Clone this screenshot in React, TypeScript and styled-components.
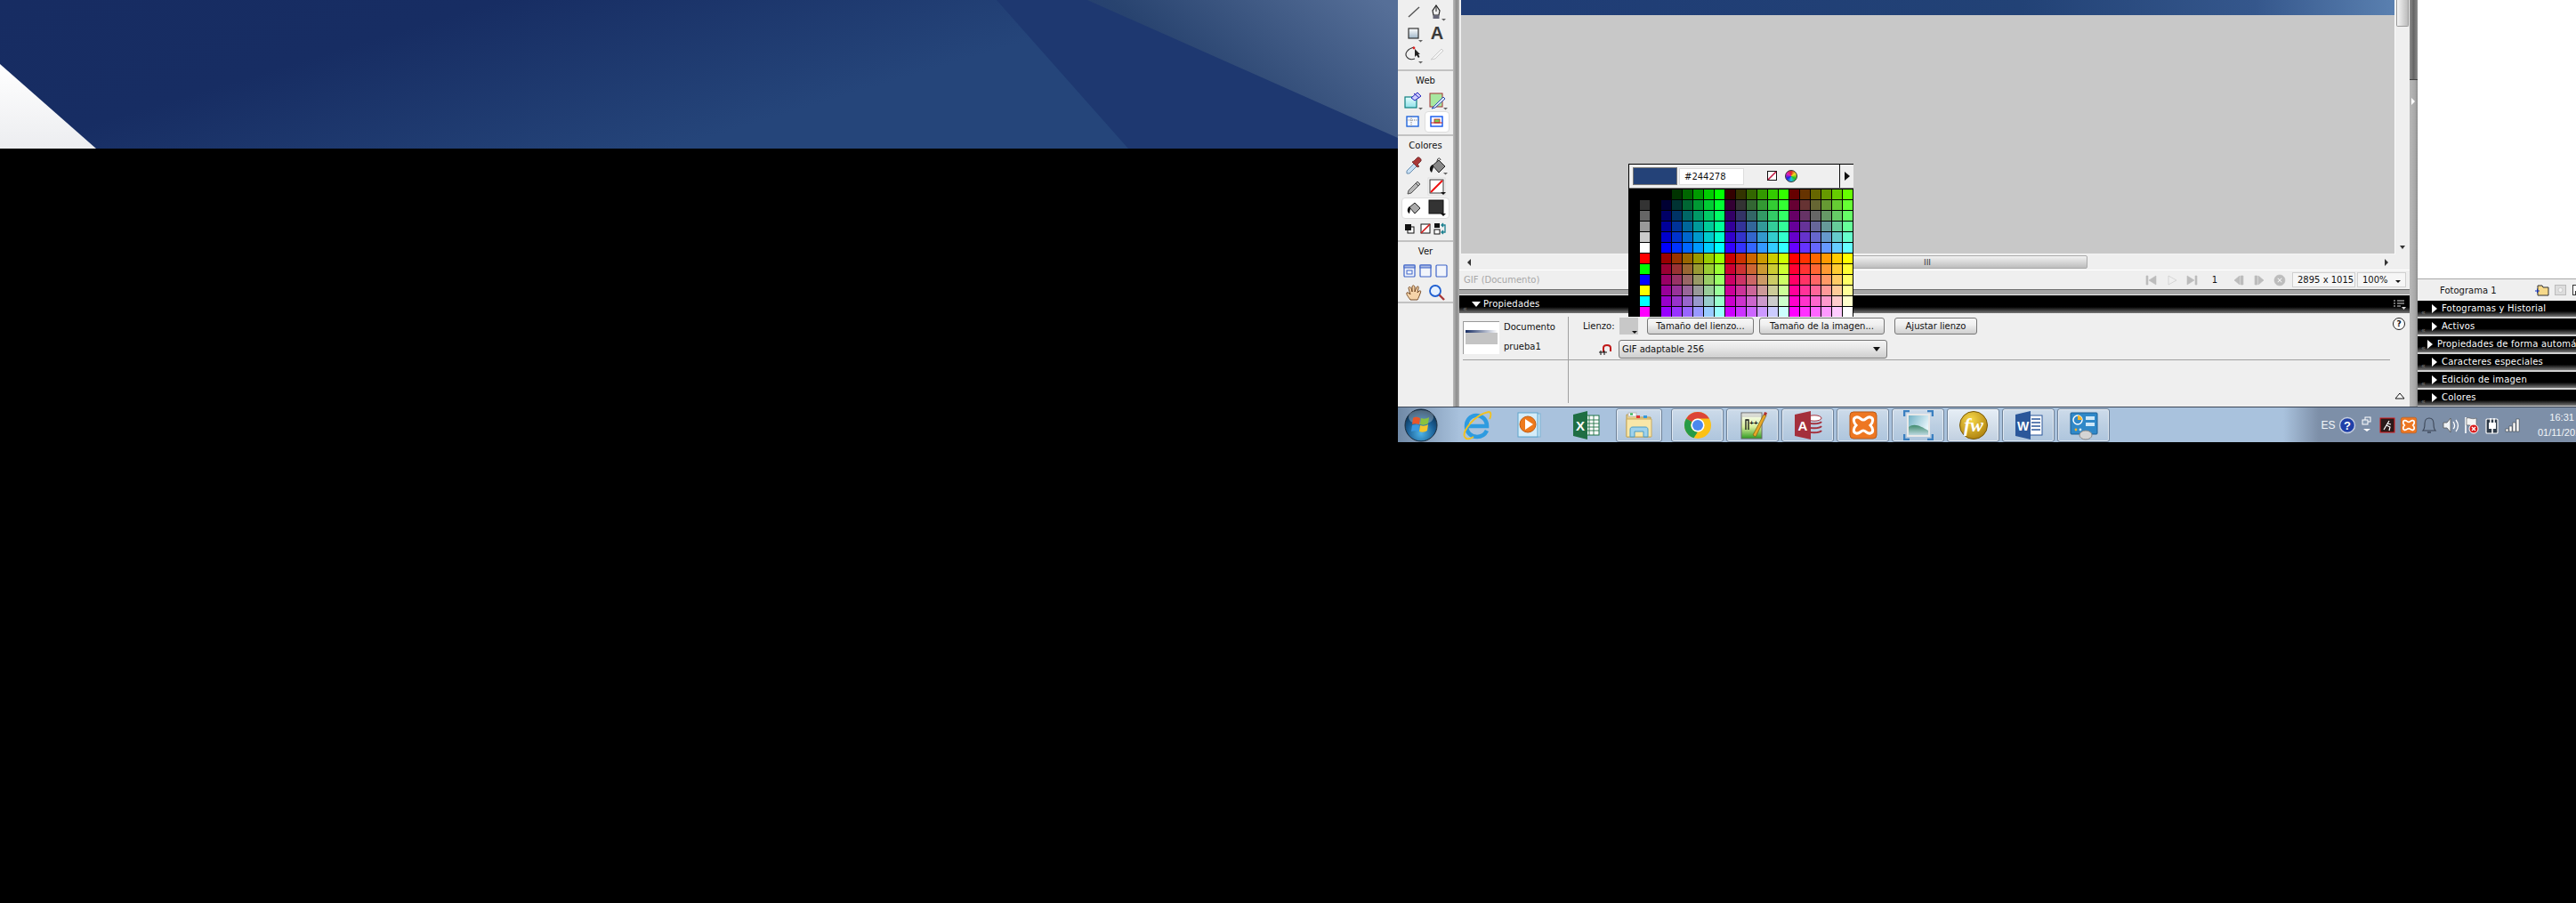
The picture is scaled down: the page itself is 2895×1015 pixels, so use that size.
import { createGlobalStyle, styled } from "styled-components";

const GlobalStyle = createGlobalStyle`
  html, body {
    margin: 0;
    padding: 0;
    background: #000;
    overflow: hidden;
  }
  body {
    font-family: "DejaVu Sans", "Liberation Sans", sans-serif;
    font-size: 10px;
    color: #111;
  }
`;

const Caret = ({ x = 20, y = 20 }: { x?: number; y?: number }) => (
  <polygon points={`${x},${y} ${x + 5},${y} ${x + 2.5},${y + 2.5}`} fill="#666" />
);

const ToolSvg = styled.svg<{ $narrow?: boolean }>`
  display: block;
  width: ${(p) => (p.$narrow ? 16 : 26)}px;
  height: 24px;
  flex: none;
`;

const LineTool = () => (
  <ToolSvg viewBox="0 0 26 24">
    <line x1="7" y1="18" x2="19" y2="7" stroke="#555" strokeWidth="1.4" />
  </ToolSvg>
);

const PenTool = () => (
  <ToolSvg viewBox="0 0 26 24">
    <path d="M12 5 L16 11 L15 16 L9 16 L8 11 Z" fill="#eee" stroke="#222" strokeWidth="1.2" />
    <line x1="12" y1="5" x2="12" y2="12" stroke="#222" />
    <rect x="8.5" y="16" width="7" height="4" fill="#667" />
    <Caret x={18} y={20} />
  </ToolSvg>
);

const RectTool = () => (
  <ToolSvg viewBox="0 0 26 24">
    <defs>
      <linearGradient id="rectFill" x1="0" y1="0" x2="0" y2="1">
        <stop offset="0" stopColor="#fff" />
        <stop offset="1" stopColor="#9fb6c8" />
      </linearGradient>
    </defs>
    <rect x="7" y="7" width="11" height="11" fill="url(#rectFill)" stroke="#333" strokeWidth="1.2" />
    <Caret x={18} y={20} />
  </ToolSvg>
);

const TextTool = () => (
  <ToolSvg viewBox="0 0 26 24">
    <text x="13" y="19" textAnchor="middle" fontFamily="Liberation Sans" fontWeight="700" fontSize="20" fill="#3a3a3a">
      A
    </text>
  </ToolSvg>
);

const SubselectTool = () => (
  <ToolSvg viewBox="0 0 26 24">
    <path d="M13 4 C6 6 2 11 5 15 C7 18 11 18 14 17" fill="none" stroke="#333" strokeWidth="1.1" />
    <circle cx="13" cy="5" r="1.4" fill="#e02020" />
    <path d="M14 6 L14 15 L16 13 L18 16 L19.5 15 L18 12 L20 12 Z" fill="#222" />
    <Caret x={18} y={20} />
  </ToolSvg>
);

const KnifeTool = () => (
  <ToolSvg viewBox="0 0 26 24">
    <path d="M6 18 L18 6 L20 8 L11 17 Z" fill="#f4f4f4" stroke="#ccc" />
  </ToolSvg>
);

const HotspotTool = () => (
  <ToolSvg viewBox="0 0 26 24">
    <defs>
      <linearGradient id="hotspotFill" x1="0" y1="0" x2="0" y2="1">
        <stop offset="0" stopColor="#e8ffff" />
        <stop offset="1" stopColor="#8fe0e8" />
      </linearGradient>
    </defs>
    <rect x="3" y="8" width="13" height="12" fill="url(#hotspotFill)" stroke="#0d7f7f" strokeWidth="1.2" />
    <path d="M10 9 L17 3 L21 7 L14 12 Z" fill="#cfcfff" stroke="#2222bb" />
    <line x1="13" y1="4" x2="19" y2="9" stroke="#2222bb" />
    <Caret x={18} y={20} />
  </ToolSvg>
);

const SliceTool = () => (
  <ToolSvg viewBox="0 0 26 24">
    <rect x="5" y="4" width="14" height="15" fill="#a8e8a0" stroke="#a03030" strokeWidth="1" />
    <path d="M7 21 L20 8 L22 10 L11 20 Z" fill="#dfe8f8" stroke="#2a4fb0" />
    <Caret x={20} y={20} />
  </ToolSvg>
);

const HideSlices = () => (
  <ToolSvg viewBox="0 0 26 24">
    <rect x="6" y="6" width="13" height="11" fill="#f4f8ff" stroke="#2266dd" strokeWidth="1.4" />
    <path d="M6 10 H19 M11 6 V17" stroke="#777" strokeDasharray="1 1" />
  </ToolSvg>
);

const ShowSlices = () => (
  <ToolSvg viewBox="0 0 26 24">
    <rect x="6" y="6" width="13" height="11" fill="#fff" stroke="#1155ee" strokeWidth="1.4" />
    <rect x="10" y="9" width="6" height="4" fill="#7fc850" stroke="#c02020" strokeWidth="0.8" />
    <path d="M6 13 H19" stroke="#c02020" />
  </ToolSvg>
);

const Eyedropper = () => (
  <ToolSvg viewBox="0 0 26 24">
    <path d="M5 21 L5 18 L14 9 L17 12 L8 21 Z" fill="#c8e0f4" stroke="#6b8fb0" />
    <path d="M13 7 L17 3 C19 2 22 5 21 7 L17 11 L19 13 L17 14 L11 8 Z" fill="#a83838" stroke="#5a1a1a" strokeWidth="0.7" />
  </ToolSvg>
);

const Bucket = () => (
  <ToolSvg viewBox="0 0 26 24">
    <path d="M8 12 L15 6 L22 13 L15 20 Z" fill="#888" stroke="#222" />
    <path d="M8 11 C4 13 4 18 7 20 L9 14 Z" fill="#111" />
    <path d="M13 8 C13 4 16 2 17 6" fill="none" stroke="#333" />
    <Caret x={20} y={20} />
  </ToolSvg>
);

const Pencil = () => (
  <ToolSvg viewBox="0 0 26 24">
    <path d="M6 20 L7 16 L17 6 L20 9 L10 19 Z" fill="#b8b8b8" stroke="#555" />
    <path d="M15 8 L18 11" stroke="#555" />
  </ToolSvg>
);

const StrokeSwatch = () => (
  <ToolSvg viewBox="0 0 26 24">
    <rect x="3" y="2" width="19" height="19" fill="#fff" stroke="#ddd" />
    <rect x="5" y="4" width="15" height="15" fill="#fff" stroke="#333" />
    <line x1="6" y1="18" x2="19" y2="5" stroke="#ee1111" strokeWidth="2" />
    <polygon points="17,18 23,18 20,21" fill="#111" />
  </ToolSvg>
);

const FillBucket = () => (
  <ToolSvg viewBox="0 0 26 24">
    <path d="M8 11 L14 6 L20 12 L14 18 Z" fill="#aaa" stroke="#222" />
    <path d="M8 10 C5 12 5 17 8 18 L9 13 Z" fill="#111" />
  </ToolSvg>
);

const FillSwatch = () => (
  <ToolSvg viewBox="0 0 26 24">
    <rect x="4" y="3" width="16" height="15" fill="#333" stroke="#111" />
    <polygon points="17,18 23,18 20,21" fill="#111" />
  </ToolSvg>
);

const DefaultColors = () => (
  <ToolSvg $narrow viewBox="0 0 16 24">
    <rect x="5" y="9" width="7" height="7" fill="#fff" stroke="#111" />
    <rect x="2" y="6" width="7" height="7" fill="#111" />
  </ToolSvg>
);

const NoColor = () => (
  <ToolSvg $narrow viewBox="0 0 16 24">
    <rect x="3" y="6" width="10" height="10" fill="#fff" stroke="#111" />
    <line x1="3" y1="16" x2="13" y2="6" stroke="#d01818" strokeWidth="1.6" />
  </ToolSvg>
);

const SwapColors = () => (
  <ToolSvg $narrow viewBox="0 0 16 24">
    <rect x="1" y="5" width="6" height="5" fill="#111" />
    <rect x="1" y="12" width="6" height="5" fill="#fff" stroke="#111" />
    <path d="M9 7 H13 V15 H9 M11 5 L9 7 L11 9 M11 13 L9 15 L11 17" fill="none" stroke="#1a7f8f" strokeWidth="1.3" />
  </ToolSvg>
);

const ViewIcon = ({ inner }: { inner: "dialog" | "bar" | "plain" }) => (
  <ToolSvg $narrow viewBox="0 0 16 24">
    <rect x="2" y="5" width="12" height="13" rx="1" fill="#f2f5fb" stroke="#3f64c8" strokeWidth="1.2" />
    {inner !== "plain" && <rect x="2" y="5" width="12" height="3" fill="#a9b9e4" stroke="#3f64c8" />}
    {inner === "dialog" && <rect x="5" y="11" width="6" height="4" fill="none" stroke="#3f64c8" />}
  </ToolSvg>
);

const Hand = () => (
  <ToolSvg viewBox="0 0 26 24">
    <path
      d="M9 20 C7 17 4 14 5 12 C6 11 8 13 9 14 L7 7 C7 5 9 5 10 7 L11 11 L11 5 C12 3 13 4 14 5 L14 11 L16 6 C17 4 19 5 18 7 L17 12 L19 10 C21 9 21 11 20 13 C19 16 18 18 17 20 Z"
      fill="#f5d3a8"
      stroke="#6b3f1a"
      strokeWidth="0.9"
    />
  </ToolSvg>
);

const Magnifier = () => (
  <ToolSvg viewBox="0 0 26 24">
    <circle cx="11" cy="10" r="6" fill="#e4f0ff" stroke="#1f5fd0" strokeWidth="1.8" />
    <line x1="15.5" y1="14.5" x2="21" y2="20" stroke="#a83838" strokeWidth="2.4" />
  </ToolSvg>
);

const AppSvg = styled.svg<{ $size?: number }>`
  display: block;
  width: ${(p) => p.$size ?? 34}px;
  height: ${(p) => p.$size ?? 34}px;
  flex: none;
`;

const WindowsOrb = () => (
  <AppSvg $size={38} viewBox="0 0 38 38">
    <defs>
      <radialGradient id="orbFill" cx="0.5" cy="0.75" r="0.7">
        <stop offset="0" stopColor="#4fb4e8" />
        <stop offset="0.6" stopColor="#1a5f96" />
        <stop offset="1" stopColor="#0d2f4e" />
      </radialGradient>
    </defs>
    <circle cx="19" cy="19" r="18" fill="url(#orbFill)" stroke="#1c2c3c" />
    <ellipse cx="19" cy="10" rx="14" ry="8" fill="#fff" opacity="0.28" />
    <path d="M10 11 C13 9 15 10 18 11 L17 18 C14 17 12 17 9 18 Z" fill="#e8562a" />
    <path d="M19 11 C22 12 25 12 28 10 L27 17 C24 19 21 19 18 18 Z" fill="#8ac23e" />
    <path d="M9 19 C12 18 14 18 17 19 L16 26 C13 25 11 25 8 26 Z" fill="#3a98e0" />
    <path d="M18 19 C21 20 24 20 27 18 L26 25 C23 27 20 27 17 26 Z" fill="#f5c52a" />
  </AppSvg>
);

const IeIcon = () => (
  <AppSvg viewBox="0 0 34 34">
    <path d="M7 18 H28 C28 10 22 6 16 6 C9 6 5 12 5 18 C5 25 10 30 17 30 C22 30 26 27 28 23" fill="none" stroke="#2e9be0" strokeWidth="4.6" />
    <path d="M3 30 C0 24 14 5 30 2 C33 2 33 6 31 10" fill="none" stroke="#f2c21f" strokeWidth="1.8" />
    <path d="M3 30 C5 34 10 32 13 30" fill="none" stroke="#f2c21f" strokeWidth="1.8" />
  </AppSvg>
);

const MediaPlayerIcon = () => (
  <AppSvg viewBox="0 0 34 34">
    <rect x="8" y="4" width="22" height="26" fill="#bfe0f2" stroke="#7fb4d4" />
    <rect x="5" y="3" width="22" height="27" fill="#d4ecf8" stroke="#5fa4cc" />
    <circle cx="16" cy="16" r="9" fill="#ee7a1c" stroke="#c25c10" />
    <polygon points="13,10 13,22 22,16" fill="#fff" />
  </AppSvg>
);

const ExcelIcon = () => (
  <AppSvg viewBox="0 0 34 34">
    <rect x="14" y="6" width="17" height="22" fill="#fff" stroke="#1f7246" />
    <path d="M20 6 V28 M25 6 V28 M14 11 H31 M14 15 H31 M14 19 H31 M14 23 H31" stroke="#1f7246" strokeWidth="0.9" />
    <polygon points="2,5 18,1 18,33 2,29" fill="#1f6e43" />
    <text x="10" y="23" textAnchor="middle" fontFamily="Liberation Sans" fontWeight="700" fontSize="15" fill="#fff">
      X
    </text>
  </AppSvg>
);

const FolderIcon = () => (
  <AppSvg viewBox="0 0 34 34">
    <path d="M3 5 H13 L15 8 H30 V30 H3 Z" fill="#e9cf86" stroke="#b89a50" />
    <rect x="5" y="3" width="9" height="4" fill="#fff" stroke="#bbb" />
    <rect x="7" y="3.5" width="3" height="2" fill="#22b14c" />
    <rect x="14" y="6" width="4" height="3" fill="#dd3333" />
    <rect x="22" y="6" width="4" height="3" fill="#3399dd" />
    <path d="M3 10 H31 V30 H3 Z" fill="#f9e7a8" stroke="#c8aa60" />
    <path d="M7 30 V22 C7 20 8 19 10 19 H24 C26 19 27 20 27 22 V30 H22 V24 H12 V30 Z" fill="#9ed2ec" stroke="#4b9cc8" />
  </AppSvg>
);

const ChromeIcon = () => (
  <AppSvg viewBox="0 0 34 34">
    <circle cx="17" cy="17" r="15" fill="#fbc116" />
    <path d="M17 2 A15 15 0 0 1 30 9.5 L17 9.5 A7.5 7.5 0 0 0 10.5 13.2 L4 9.5 A15 15 0 0 1 17 2 Z" fill="#dc4437" />
    <path d="M4 9.5 L10.5 13.2 A7.5 7.5 0 0 0 17 24.5 L12.5 31.3 A15 15 0 0 1 4 9.5 Z" fill="#259b47" />
    <circle cx="17" cy="17" r="7.6" fill="#fff" />
    <circle cx="17" cy="17" r="6" fill="#4a88ee" />
  </AppSvg>
);

const NotepadIcon = () => (
  <AppSvg viewBox="0 0 34 34">
    <defs>
      <linearGradient id="notepadFill" x1="0" y1="0" x2="0" y2="1">
        <stop offset="0" stopColor="#fff" />
        <stop offset="0.55" stopColor="#d8ee9a" />
        <stop offset="1" stopColor="#2e9a22" />
      </linearGradient>
    </defs>
    <rect x="4" y="3" width="23" height="29" fill="url(#notepadFill)" stroke="#666" />
    <path d="M5 5 H26 M5 7 H26" stroke="#bbb" />
    <path d="M9 22 V11 H12 V22" fill="none" stroke="#111" strokeWidth="1.3" />
    <text x="18" y="17" textAnchor="middle" fontFamily="Liberation Sans" fontWeight="700" fontSize="8" fill="#111">
      ++
    </text>
    <path d="M17 28 L29 5 L32 6 L20 30 Z" fill="#e8a828" stroke="#7a5a10" strokeWidth="0.7" />
    <path d="M29 5 L30 2 L33 3 L32 6 Z" fill="#b03030" />
  </AppSvg>
);

const AccessIcon = () => (
  <AppSvg viewBox="0 0 34 34">
    <ellipse cx="24" cy="9" rx="8" ry="3.2" fill="#fff" stroke="#a4303c" />
    <path d="M16 13 C18 16 30 16 32 13 M16 18 C18 21 30 21 32 18 M16 23 C18 26 30 26 32 23" fill="none" stroke="#a4303c" strokeWidth="2" />
    <polygon points="2,5 20,1 20,33 2,29" fill="#a4303c" />
    <text x="11" y="23" textAnchor="middle" fontFamily="Liberation Sans" fontWeight="700" fontSize="15" fill="#fff">
      A
    </text>
  </AppSvg>
);

const XamppMark = () => (
  <>
    <rect x="2" y="2" width="30" height="30" rx="4" fill="#ee7722" stroke="#b85a18" />
    <path
      d="M9 8 C13 7 14 11 17 11 C20 11 21 7 25 8 C29 9 28 14 25 17 C28 20 29 25 25 26 C21 27 20 23 17 23 C14 23 13 27 9 26 C5 25 6 20 9 17 C6 14 5 9 9 8 Z"
      fill="none"
      stroke="#fff"
      strokeWidth="3"
    />
  </>
);

const XamppIcon = () => (
  <AppSvg viewBox="0 0 34 34">
    <XamppMark />
  </AppSvg>
);

const PictureIcon = () => (
  <AppSvg viewBox="0 0 34 34">
    <defs>
      <linearGradient id="skyFill" x1="0" y1="0" x2="1" y2="0.5">
        <stop offset="0" stopColor="#6fb0c4" />
        <stop offset="1" stopColor="#e8f6fb" />
      </linearGradient>
      <linearGradient id="hillFill" x1="0" y1="0" x2="0" y2="1">
        <stop offset="0" stopColor="#3f8a6c" />
        <stop offset="1" stopColor="#bcd8e0" />
      </linearGradient>
    </defs>
    <rect x="5" y="5" width="24" height="24" fill="url(#skyFill)" stroke="#e8e8e8" strokeWidth="2" />
    <path d="M6 19 C12 14 20 18 28 23 V28 H6 Z" fill="url(#hillFill)" />
    <path d="M1 7 V1 H7 M27 1 H33 V7 M1 27 V33 H7 M27 33 H33 V27" fill="none" stroke="#3a7fc0" strokeWidth="2.6" />
  </AppSvg>
);

const FireworksIcon = () => (
  <AppSvg viewBox="0 0 34 34">
    <defs>
      <radialGradient id="fwFill" cx="0.4" cy="0.3" r="0.8">
        <stop offset="0" stopColor="#f7d84a" />
        <stop offset="1" stopColor="#a87a08" />
      </radialGradient>
    </defs>
    <circle cx="17" cy="17" r="15.5" fill="url(#fwFill)" stroke="#7a5a08" />
    <text x="17" y="24" textAnchor="middle" fontFamily="Liberation Serif" fontStyle="italic" fontWeight="700" fontSize="22" fill="#fff">
      fw
    </text>
  </AppSvg>
);

const WordIcon = () => (
  <AppSvg viewBox="0 0 34 34">
    <rect x="14" y="6" width="18" height="22" fill="#fff" stroke="#2b579a" />
    <path d="M20 10 H30 M20 14 H30 M20 18 H30 M20 22 H30" stroke="#2b579a" strokeWidth="1.5" />
    <polygon points="2,5 19,1 19,33 2,29" fill="#2b579a" />
    <text x="10.5" y="23" textAnchor="middle" fontFamily="Liberation Sans" fontWeight="700" fontSize="14" fill="#fff">
      W
    </text>
  </AppSvg>
);

const ControlPanelIcon = () => (
  <AppSvg viewBox="0 0 34 34">
    <rect x="2" y="3" width="30" height="24" rx="1" fill="#2f88c8" stroke="#1c5f94" />
    <circle cx="10" cy="11" r="5" fill="none" stroke="#fff" strokeWidth="1.4" />
    <path d="M10 11 V6 A5 5 0 0 1 15 11 Z" fill="#f5b52a" />
    <rect x="19" y="7" width="10" height="4" fill="#cfe8f8" />
    <rect x="19" y="14" width="10" height="4" fill="#cfe8f8" />
    <circle cx="8" cy="22" r="1.4" fill="#f5b52a" />
    <circle cx="13" cy="22" r="1.4" fill="#cfe8f8" />
    <ellipse cx="19" cy="28" rx="7" ry="5" fill="#d4d4d4" stroke="#8a8a8a" />
  </AppSvg>
);

const TraySvg = styled.svg`
  display: block;
  width: 20px;
  height: 22px;
`;

const HelpBall = () => (
  <TraySvg viewBox="0 0 20 22">
    <circle cx="10" cy="11" r="8.5" fill="#1f3fa8" stroke="#c8d0e0" strokeWidth="1.4" />
    <text x="10" y="15.5" textAnchor="middle" fontFamily="Liberation Sans" fontWeight="700" fontSize="13" fill="#fff">
      ?
    </text>
  </TraySvg>
);

const TrayArrow = () => (
  <TraySvg viewBox="0 0 20 22">
    <rect x="8" y="2" width="6" height="5" fill="none" stroke="#fff" />
    <rect x="5" y="5" width="6" height="5" fill="#889cb4" stroke="#fff" />
    <polygon points="6,15 14,15 10,18" fill="#fff" />
  </TraySvg>
);

const RunnerIcon = () => (
  <TraySvg viewBox="0 0 20 22">
    <rect x="2" y="3" width="16" height="16" fill="#2a1a1a" stroke="#d81818" />
    <path d="M12 6 L9 11 L6 16 M9 11 L13 13 L12 17 M10 9 L14 10" fill="none" stroke="#fff" strokeWidth="1.2" />
  </TraySvg>
);

const TrayXampp = () => (
  <TraySvg viewBox="0 0 34 34">
    <XamppMark />
  </TraySvg>
);

const Bell = () => (
  <TraySvg viewBox="0 0 20 22">
    <path d="M3 17 C5 15 5 12 5 9 C5 5 7 3 10 3 C13 3 15 5 15 9 C15 12 15 15 17 17 Z" fill="#7d8fa8" stroke="#3c4656" strokeWidth="1.1" />
    <path d="M8 19 H12" stroke="#3c4656" strokeWidth="1.4" />
  </TraySvg>
);

const Speaker = () => (
  <TraySvg viewBox="0 0 20 22">
    <path d="M2 8 H6 L10 3 V19 L6 14 H2 Z" fill="#eef2f6" stroke="#555" strokeWidth="0.8" />
    <path d="M13 7 C15 10 15 13 13 15 M16 5 C19 9 19 14 16 18" fill="none" stroke="#fff" strokeWidth="1.3" />
  </TraySvg>
);

const FlagIcon = () => (
  <TraySvg viewBox="0 0 20 22">
    <path d="M4 2 V20" stroke="#fff" strokeWidth="1.6" />
    <path d="M5 3 C9 2 11 5 16 3 V11 C11 13 9 10 5 11 Z" fill="#f4f4f4" stroke="#555" strokeWidth="0.6" />
    <circle cx="13" cy="15" r="5" fill="#d81818" stroke="#fff" />
    <path d="M11 13 L15 17 M15 13 L11 17" stroke="#fff" strokeWidth="1.4" />
  </TraySvg>
);

const PlugIcon = () => (
  <TraySvg viewBox="0 0 20 22">
    <rect x="3" y="4" width="13" height="16" rx="1" fill="#2e3a48" stroke="#fff" strokeWidth="1.2" />
    <rect x="6" y="8" width="8" height="7" fill="#fff" />
    <path d="M8 3 V8 M12 3 V8 M10 15 V20" stroke="#fff" strokeWidth="1.6" />
  </TraySvg>
);

const SignalIcon = () => (
  <TraySvg viewBox="0 0 20 22">
    <rect x="2" y="15" width="3" height="3" fill="#fff" stroke="#333" strokeWidth="0.5" />
    <rect x="6" y="12" width="3" height="6" fill="#fff" stroke="#333" strokeWidth="0.5" />
    <rect x="10" y="8" width="3" height="10" fill="#fff" stroke="#333" strokeWidth="0.5" />
    <rect x="14" y="4" width="3" height="14" fill="#fff" stroke="#333" strokeWidth="0.5" />
  </TraySvg>
);

const Banner = () => (
  <BannerSvg viewBox="0 0 1571 167">
    <defs>
      <linearGradient id="bannerBase" x1="0" y1="0" x2="1" y2="0.35">
        <stop offset="0" stopColor="#172c62" />
        <stop offset="0.32" stopColor="#172d63" />
        <stop offset="0.74" stopColor="#25457a" />
      </linearGradient>
      <linearGradient id="bannerWedge" x1="0" y1="0.6" x2="1" y2="0.1">
        <stop offset="0" stopColor="#1e3a72" />
        <stop offset="0.3" stopColor="#28436f" />
        <stop offset="1" stopColor="#566f98" />
      </linearGradient>
      <linearGradient id="bannerWhite" x1="0" y1="0" x2="0" y2="1">
        <stop offset="0" stopColor="#fff" />
        <stop offset="1" stopColor="#ecedf0" />
      </linearGradient>
    </defs>
    <rect width="1571" height="167" fill="url(#bannerBase)" />
    <polygon points="1120,0 1571,0 1571,167 1268,167" fill="#1e3870" />
    <polygon points="1222,0 1571,0 1571,155" fill="url(#bannerWedge)" />
    <polygon points="0,72 36,167 0,167" fill="url(#bannerWhite)" transform="scale(3 1)" />
  </BannerSvg>
);

const PALETTE_STEPS = ["00", "33", "66", "99", "cc", "ff"];
const SYSTEM_COLORS = ["000000", "333333", "666666", "999999", "cccccc", "ffffff", "ff0000", "00ff00", "0000ff", "ffff00", "00ffff", "ff00ff"];

const paletteCells = () => {
  const cells: string[] = [];
  for (let row = 0; row < 12; row++) {
    cells.push("000000", SYSTEM_COLORS[row], "000000");
    const blue = PALETTE_STEPS[row % 6];
    const redBase = row < 6 ? 0 : 3;
    for (let r = 0; r < 3; r++) {
      for (let g = 0; g < 6; g++) {
        cells.push(PALETTE_STEPS[redBase + r] + PALETTE_STEPS[g] + blue);
      }
    }
  }
  return cells;
};

const COLLAPSED_PANELS = [
  "Fotogramas y Historial",
  "Activos",
  "Propiedades de forma automática",
  "Caracteres especiales",
  "Edición de imagen",
  "Colores",
];

const TASK_APPS = [FolderIcon, ChromeIcon, NotepadIcon, AccessIcon, XamppIcon, PictureIcon, FireworksIcon, WordIcon, ControlPanelIcon];

const App = () => {
  return (
    <Page>
      <GlobalStyle />
      <BannerArea>
        <Banner />
      </BannerArea>
      <AppWindow>
        <Workspace>
          <ToolsPanel>
            <ToolSection $height={80}>
              <ToolRow $gap={0}>
                <LineTool />
                <PenTool />
              </ToolRow>
              <ToolRow $gap={0}>
                <RectTool />
                <TextTool />
              </ToolRow>
              <ToolRow $gap={0}>
                <SubselectTool />
                <KnifeTool />
              </ToolRow>
            </ToolSection>
            <ToolSection $height={73}>
              <SectionTitle>Web</SectionTitle>
              <ToolRow $gap={0}>
                <HotspotTool />
                <SliceTool />
              </ToolRow>
              <ToolRow $gap={0}>
                <HideSlices />
                <Selected>
                  <ShowSlices />
                </Selected>
              </ToolRow>
            </ToolSection>
            <ToolSection $height={119}>
              <SectionTitle>Colores</SectionTitle>
              <ToolRow $gap={0}>
                <Eyedropper />
                <Bucket />
              </ToolRow>
              <ToolRow $gap={0}>
                <Pencil />
                <StrokeSwatch />
              </ToolRow>
              <ToolRow $gap={0}>
                <Selected>
                  <FillBucket />
                  <FillSwatch />
                </Selected>
              </ToolRow>
              <ToolRow $gap={1}>
                <DefaultColors />
                <NoColor />
                <SwapColors />
              </ToolRow>
            </ToolSection>
            <ToolSection $height={69}>
              <SectionTitle>Ver</SectionTitle>
              <ToolRow $gap={2}>
                <ViewIcon inner="dialog" />
                <ViewIcon inner="bar" />
                <ViewIcon inner="plain" />
              </ToolRow>
              <ToolRow $gap={0}>
                <Hand />
                <Magnifier />
              </ToolRow>
            </ToolSection>
          </ToolsPanel>
          <Splitter />
          <CenterColumn>
            <DocRow>
              <DocView>
                <DocStrip />
                <Canvas />
              </DocView>
              <VScroll>
                <VThumb />
                <VArrow />
              </VScroll>
            </DocRow>
            <HScroll>
              <ArrowBox>
                <ArrowLeft />
              </ArrowBox>
              <HThumb>III</HThumb>
              <ArrowBox>
                <ArrowRight />
              </ArrowBox>
            </HScroll>
            <StatusBar>
              <StatusLabel>GIF (Documento)</StatusLabel>
              <PlayControls>
                <PlayIcon d="M3 3 H5 V13 H3 Z M14 3 V13 L6 8 Z" />
                <PlayIcon d="M5 3 L14 8 L5 13 Z" $hollow />
                <PlayIcon d="M12 3 H14 V13 H12 Z M3 3 V13 L11 8 Z" />
                <FrameNumber>1</FrameNumber>
                <PlayIcon d="M10 3 H13 V13 H10 Z M9 3 V13 L3 8 Z" />
                <PlayIcon d="M3 3 H6 V13 H3 Z M7 3 V13 L13 8 Z" />
                <PlayIcon d="M8 2 A6 6 0 1 1 7.99 2 Z M5 6 L6 5 L8 7 L10 5 L11 6 L9 8 L11 10 L10 11 L8 9 L6 11 L5 10 L7 8 Z" />
              </PlayControls>
              <SizeBox $width={71}>2895 x 1015</SizeBox>
              <SizeBox $width={55}>
                100%
                <SmallCaret />
              </SizeBox>
            </StatusBar>
            <Divider />
            <PropsHeader>
              <Grip>«</Grip>
              <DownTriangle />
              <PanelTitle $left={3}>Propiedades</PanelTitle>
              <MenuIcon viewBox="0 0 16 14">
                <path d="M1 3 H3 M5 3 H13 M1 6 H3 M5 6 H13 M1 9 H3 M5 9 H9" stroke="#ddd" strokeWidth="1.2" />
                <polygon points="10,10 15,10 12.5,13" fill="#ddd" />
              </MenuIcon>
            </PropsHeader>
            <PropsBody>
              <PropsMain>
                <PropsTop>
                  <DocInfo>
                    <DocThumb>
                      <ThumbStrip />
                      <ThumbCanvas />
                    </DocThumb>
                    <DocNames>
                      <span>Documento</span>
                      <span>prueba1</span>
                    </DocNames>
                  </DocInfo>
                  <FormArea>
                    <FormRow>
                      <CanvasLabel>Lienzo:</CanvasLabel>
                      <CanvasSwatch />
                      <ActionButton $width={120} $left={10}>
                        Tamaño del lienzo...
                      </ActionButton>
                      <ActionButton $width={141} $left={6}>
                        Tamaño de la imagen...
                      </ActionButton>
                      <ActionButton $width={93} $left={11}>
                        Ajustar lienzo
                      </ActionButton>
                    </FormRow>
                    <FormRow>
                      <MagnetIcon viewBox="0 0 16 14">
                        <path d="M6 10 V5 C6 1 14 1 14 5 V9" fill="none" stroke="#c01818" strokeWidth="2" />
                        <path d="M1 10 H10 M3 8 V13 M7 8 V13" stroke="#111" />
                      </MagnetIcon>
                      <SelectBox>
                        GIF adaptable 256
                        <SelectCaret />
                      </SelectBox>
                    </FormRow>
                  </FormArea>
                </PropsTop>
                <PropsBottom>
                  <BottomCell />
                </PropsBottom>
              </PropsMain>
              <PropsSide>
                <HelpCircle>?</HelpCircle>
                <CollapseTriangle viewBox="0 0 12 8">
                  <polygon points="6,1 11,7 1,7" fill="#fff" stroke="#111" />
                </CollapseTriangle>
              </PropsSide>
            </PropsBody>
          </CenterColumn>
          <RightSplitter>
            <SplitterDark />
            <SplitterHandle />
          </RightSplitter>
          <RightPanel>
            <LayersArea />
            <FrameRow>
              <FrameName>Fotograma 1</FrameName>
              <FrameIcons>
                <svg width="16" height="14" viewBox="0 0 16 14">
                  <path d="M3 2 H8 L9 4 H15 V13 H3 Z" fill="#f6d98a" stroke="#333" />
                  <path d="M0 8 H5 M2.5 5.5 V10.5" stroke="#1133bb" />
                </svg>
                <svg width="14" height="14" viewBox="0 0 14 14">
                  <rect x="0.5" y="1.5" width="12" height="11" fill="#ddd" stroke="#bbb" />
                  <circle cx="6.5" cy="7" r="2.5" fill="#f4f4f4" stroke="#ccc" />
                </svg>
                <svg width="14" height="14" viewBox="0 0 14 14">
                  <rect x="0.5" y="1.5" width="12" height="11" fill="#fff" stroke="#333" />
                  <rect x="3" y="8" width="4" height="4" fill="#333" />
                </svg>
              </FrameIcons>
            </FrameRow>
            {COLLAPSED_PANELS.map((title) => (
              <CollapsedPanel key={title}>
                <Grip>«</Grip>
                <RightTriangle />
                <PanelTitle $left={5}>{title}</PanelTitle>
              </CollapsedPanel>
            ))}
          </RightPanel>
        </Workspace>
        <Taskbar>
          <StartSlot>
            <WindowsOrb />
          </StartSlot>
          <PinnedSlot $left={27}>
            <IeIcon />
          </PinnedSlot>
          <PinnedSlot $left={24}>
            <MediaPlayerIcon />
          </PinnedSlot>
          <PinnedSlot $left={31}>
            <ExcelIcon />
          </PinnedSlot>
          <TaskButtons>
            {TASK_APPS.map((AppIcon, index) => (
              <TaskButton key={index} $first={index === 0} $active={index === 6}>
                <AppIcon />
              </TaskButton>
            ))}
          </TaskButtons>
          <Tray>
            <LangLabel>ES</LangLabel>
            <HelpSlot>
              <HelpBall />
            </HelpSlot>
            <TrayItem>
              <TrayArrow />
            </TrayItem>
            <TrayItem>
              <RunnerIcon />
            </TrayItem>
            <TrayItem>
              <TrayXampp />
            </TrayItem>
            <TrayItem>
              <Bell />
            </TrayItem>
            <TrayItem>
              <Speaker />
            </TrayItem>
            <TrayItem>
              <FlagIcon />
            </TrayItem>
            <TrayItem>
              <PlugIcon />
            </TrayItem>
            <TrayItem>
              <SignalIcon />
            </TrayItem>
            <Clock>
              <span>16:31</span>
              <span>01/11/2016</span>
            </Clock>
          </Tray>
        </Taskbar>
        <ColorPopup>
          <PopupHeader>
            <PopupSwatch />
            <HexInput>#244278</HexInput>
            <NoneIcon viewBox="0 0 12 12">
              <rect x="0.5" y="0.5" width="10" height="10" fill="#fff" stroke="#111" />
              <line x1="1" y1="10" x2="10" y2="1" stroke="#c01840" strokeWidth="1.6" />
            </NoneIcon>
            <ColorWheel />
            <PopupMenuButton>
              <RightArrowBlack />
            </PopupMenuButton>
          </PopupHeader>
          <SwatchGrid>
            {paletteCells().map((color, index) => (
              <SwatchCell key={index} $color={color} />
            ))}
          </SwatchGrid>
        </ColorPopup>
      </AppWindow>
    </Page>
  );
};

export default App;

const Page = styled.div`
  display: flex;
  align-items: flex-start;
  width: 2895px;
  height: 1015px;
  background: #000;
  overflow: hidden;
`;

const BannerArea = styled.div`
  width: 1571px;
  height: 167px;
  flex: none;
`;

const BannerSvg = styled.svg`
  display: block;
  width: 1571px;
  height: 167px;
`;

const AppWindow = styled.div`
  position: relative;
  display: flex;
  flex-direction: column;
  width: 1324px;
  height: 497px;
  flex: none;
  overflow: hidden;
`;

const Workspace = styled.div`
  display: flex;
  height: 457px;
  flex: none;
`;

const ToolsPanel = styled.div`
  display: flex;
  flex-direction: column;
  width: 62px;
  flex: none;
  background: #efefef;
`;

const ToolSection = styled.div<{ $height: number }>`
  display: flex;
  flex-direction: column;
  align-items: center;
  box-sizing: border-box;
  height: ${(p) => p.$height}px;
  padding-top: 1px;
  border-bottom: 2px solid #c2c2c2;
`;

const SectionTitle = styled.div`
  height: 20px;
  line-height: 20px;
  font-size: 10px;
  color: #111;
`;

const ToolRow = styled.div<{ $gap: number }>`
  display: flex;
  align-items: center;
  justify-content: center;
  gap: ${(p) => p.$gap}px;
  height: 24px;
  flex: none;
`;

const Selected = styled.div`
  display: flex;
  align-items: center;
  height: 24px;
  background: #fff;
  border: 1px solid #ddd;
  border-radius: 4px;
  box-sizing: border-box;
`;

const Splitter = styled.div`
  width: 7px;
  flex: none;
  background: linear-gradient(90deg, #b8b8b8, #8c8c8c 60%, #b0b0b0);
`;

const CenterColumn = styled.div`
  display: flex;
  flex-direction: column;
  width: 1068px;
  flex: none;
  background: #efefef;
`;

const DocRow = styled.div`
  display: flex;
  height: 286px;
  flex: none;
`;

const DocView = styled.div`
  display: flex;
  flex-direction: column;
  flex: 1;
  margin-left: 2px;
`;

const DocStrip = styled.div`
  height: 17px;
  flex: none;
  background: linear-gradient(90deg, #1f3c75 0%, #224276 60%, #35578c 85%, #5a80b0 100%);
`;

const Canvas = styled.div`
  flex: 1;
  background: #c8c8c8;
  border-bottom: 1px solid #f4f4f4;
`;

const VScroll = styled.div`
  display: flex;
  flex-direction: column;
  justify-content: space-between;
  align-items: center;
  width: 17px;
  flex: none;
  background: #efefef;
  border-left: 1px solid #fafafa;
  box-sizing: border-box;
  padding-bottom: 6px;
`;

const VThumb = styled.div`
  width: 14px;
  height: 30px;
  box-sizing: border-box;
  border: 1px solid #999;
  border-top: 0;
  border-radius: 0 0 2px 2px;
  background: linear-gradient(90deg, #f4f4f4, #bcbcbc);
`;

const VArrow = styled.div`
  width: 0;
  height: 0;
  border-left: 3px solid transparent;
  border-right: 3px solid transparent;
  border-top: 4px solid #333;
`;

const HScroll = styled.div`
  display: flex;
  align-items: center;
  height: 17px;
  flex: none;
  padding-left: 2px;
  padding-right: 17px;
  background: #efefef;
`;

const ArrowBox = styled.div`
  display: flex;
  align-items: center;
  justify-content: center;
  width: 18px;
  height: 15px;
  flex: none;
`;

const ArrowLeft = styled.div`
  width: 0;
  height: 0;
  border-top: 4px solid transparent;
  border-bottom: 4px solid transparent;
  border-right: 4px solid #333;
`;

const ArrowRight = styled.div`
  width: 0;
  height: 0;
  border-top: 4px solid transparent;
  border-bottom: 4px solid transparent;
  border-left: 4px solid #333;
`;

const HThumb = styled.div`
  display: flex;
  align-items: center;
  justify-content: center;
  box-sizing: border-box;
  width: 360px;
  height: 15px;
  margin-left: 326px;
  margin-right: auto;
  border: 1px solid #aaa;
  border-radius: 2px;
  background: linear-gradient(#f2f2f2, #bdbdbd);
  font-size: 9px;
  color: #333;
`;

const StatusBar = styled.div`
  display: flex;
  align-items: center;
  box-sizing: border-box;
  height: 22px;
  flex: none;
  padding-right: 4px;
  background: #efefef;
  border-top: 1px solid #fff;
`;

const StatusLabel = styled.div`
  margin-left: 5px;
  color: #a8a8a8;
  font-size: 10px;
`;

const PlayControls = styled.div`
  display: flex;
  align-items: center;
  margin-left: auto;
  margin-right: 1px;
`;

const PlaySvg = styled.svg`
  display: block;
  width: 16px;
  height: 16px;
  margin: 0 3.5px;
`;

const PlayIcon = ({ d, $hollow }: { d: string; $hollow?: boolean }) => (
  <PlaySvg viewBox="0 0 16 16">
    <path d={d} fillRule="evenodd" fill={$hollow ? "none" : "#bcbcbc"} stroke={$hollow ? "#c4c4c4" : "#bcbcbc"} strokeWidth="0.6" />
  </PlaySvg>
);

const FrameNumber = styled.div`
  width: 30px;
  text-align: center;
  font-size: 10px;
  color: #111;
`;

const SizeBox = styled.div<{ $width: number }>`
  display: flex;
  align-items: center;
  justify-content: space-between;
  box-sizing: border-box;
  width: ${(p) => p.$width}px;
  height: 17px;
  margin-left: 2px;
  padding: 0 5px;
  background: #f6f6f6;
  border: 1px solid #d0d0d0;
  font-size: 10px;
  white-space: nowrap;
`;

const SmallCaret = styled.div`
  width: 0;
  height: 0;
  margin-top: 3px;
  border-left: 3px solid transparent;
  border-right: 3px solid transparent;
  border-top: 3px solid #111;
`;

const Divider = styled.div`
  height: 7px;
  flex: none;
  box-sizing: border-box;
  background: #a6a6a6;
  border-top: 1px solid #6e6e6e;
  border-bottom: 1px solid #f0f0f0;
`;

const panelBar = `
  background: linear-gradient(#000 0%, #000 65%, #777 100%);
  color: #fff;
`;

const PropsHeader = styled.div`
  ${panelBar}
  display: flex;
  align-items: center;
  height: 20px;
  flex: none;
  padding-right: 3px;
`;

const Grip = styled.span`
  align-self: flex-end;
  width: 10px;
  margin-left: 4px;
  font-size: 8px;
  line-height: 8px;
  color: #777;
`;

const DownTriangle = styled.div`
  width: 0;
  height: 0;
  border-left: 5px solid transparent;
  border-right: 5px solid transparent;
  border-top: 6px solid #fff;
`;

const RightTriangle = styled.div`
  width: 0;
  height: 0;
  margin-left: 2px;
  border-top: 5px solid transparent;
  border-bottom: 5px solid transparent;
  border-left: 6px solid #fff;
`;

const PanelTitle = styled.div<{ $left: number }>`
  margin-left: ${(p) => p.$left}px;
  font-size: 10px;
  line-height: 16px;
  letter-spacing: 0.2px;
  white-space: nowrap;
`;

const MenuIcon = styled.svg`
  width: 16px;
  height: 14px;
  margin-left: auto;
`;

const PropsBody = styled.div`
  display: flex;
  flex: 1;
  background: #efefef;
`;

const PropsMain = styled.div`
  display: flex;
  flex-direction: column;
  width: 1046px;
  flex: none;
`;

const PropsTop = styled.div`
  display: flex;
  box-sizing: border-box;
  height: 53px;
  flex: none;
  margin-left: 4px;
  border-bottom: 1px solid #a0a0a0;
`;

const DocInfo = styled.div`
  display: flex;
  box-sizing: border-box;
  width: 119px;
  height: 48px;
  margin-top: 4px;
  padding-top: 5px;
  flex: none;
  border-right: 1px solid #a0a0a0;
`;

const DocThumb = styled.div`
  display: flex;
  flex-direction: column;
  box-sizing: border-box;
  width: 41px;
  height: 37px;
  padding: 9px 2px 0;
  background: #fff;
  border-left: 1px solid #999;
  border-top: 1px solid #999;
`;

const ThumbStrip = styled.div`
  height: 3px;
  background: linear-gradient(90deg, #172d63, #ffffff);
`;

const ThumbCanvas = styled.div`
  height: 13px;
  background: #c4c4c4;
`;

const DocNames = styled.div`
  display: flex;
  flex-direction: column;
  gap: 9px;
  margin-left: 5px;
  font-size: 10px;
  line-height: 13px;
`;

const FormArea = styled.div`
  display: flex;
  flex-direction: column;
  gap: 6px;
  padding-top: 5px;
  flex: 1;
`;

const FormRow = styled.div`
  display: flex;
  align-items: center;
`;

const CanvasLabel = styled.div`
  width: 41px;
  margin-left: 16px;
  font-size: 10px;
`;

const CanvasSwatch = styled.div`
  position: relative;
  width: 21px;
  height: 19px;
  background: #c8c8c8;
  &::after {
    content: "";
    position: absolute;
    right: 1px;
    bottom: 1px;
    border-left: 3px solid transparent;
    border-right: 3px solid transparent;
    border-top: 3px solid #111;
  }
`;

const ActionButton = styled.div<{ $width: number; $left: number }>`
  display: flex;
  align-items: center;
  justify-content: center;
  box-sizing: border-box;
  width: ${(p) => p.$width}px;
  height: 19px;
  margin-left: ${(p) => p.$left}px;
  background: linear-gradient(#f7f7f7, #f0f0f0 40%, #cfcfcf);
  border: 1px solid #777;
  border-radius: 3px;
  font-size: 10px;
  white-space: nowrap;
`;

const MagnetIcon = styled.svg`
  width: 16px;
  height: 14px;
  margin-left: 33px;
`;

const SelectBox = styled.div`
  display: flex;
  align-items: center;
  justify-content: space-between;
  box-sizing: border-box;
  width: 302px;
  height: 21px;
  margin-left: 7px;
  padding: 0 7px 0 3px;
  background: linear-gradient(#f4f4f4, #e8e8e8 40%, #cfcfcf);
  border: 1px solid #777;
  border-radius: 3px;
  font-size: 10px;
`;

const SelectCaret = styled.div`
  width: 0;
  height: 0;
  border-left: 4px solid transparent;
  border-right: 4px solid transparent;
  border-top: 5px solid #111;
`;

const PropsBottom = styled.div`
  flex: 1;
  padding: 0 0 4px 4px;
  display: flex;
`;

const BottomCell = styled.div`
  width: 119px;
  box-sizing: border-box;
  border-right: 1px solid #a0a0a0;
`;

const PropsSide = styled.div`
  display: flex;
  flex: 1;
  flex-direction: column;
  justify-content: space-between;
  box-sizing: border-box;
  padding: 5px 0 8px 3px;
`;

const HelpCircle = styled.div`
  display: flex;
  align-items: center;
  justify-content: center;
  box-sizing: border-box;
  width: 14px;
  height: 14px;
  border: 1px solid #222;
  border-radius: 50%;
  background: #fafafa;
  font-size: 9px;
  font-weight: 700;
`;

const CollapseTriangle = styled.svg`
  width: 12px;
  height: 8px;
  margin-left: 2px;
`;

const RightSplitter = styled.div`
  display: flex;
  flex-direction: column;
  width: 9px;
  flex: none;
  background: linear-gradient(90deg, #b8b8b8, #a8a8a8 70%, #8a8a8a);
`;

const SplitterDark = styled.div`
  height: 90px;
  flex: none;
  background: linear-gradient(90deg, #8c8c8c, #666 50%, #8c8c8c);
  border-bottom: 1px solid #444;
  box-sizing: border-box;
`;

const SplitterHandle = styled.div`
  width: 0;
  height: 0;
  margin-top: 20px;
  margin-left: 2px;
  border-top: 4px solid transparent;
  border-bottom: 4px solid transparent;
  border-left: 4px solid #fff;
`;

const RightPanel = styled.div`
  display: flex;
  flex-direction: column;
  width: 178px;
  flex: none;
  background: #d0d0d0;
`;

const LayersArea = styled.div`
  height: 314px;
  flex: none;
  background: #fff;
  border-bottom: 1px solid #a8a8a8;
  box-sizing: border-box;
`;

const FrameRow = styled.div`
  display: flex;
  align-items: center;
  height: 24px;
  flex: none;
  background: #efefef;
`;

const FrameName = styled.div`
  margin-left: 25px;
  font-size: 10px;
`;

const FrameIcons = styled.div`
  display: flex;
  align-items: center;
  gap: 6px;
  margin-left: auto;
  margin-right: -10px;
`;

const CollapsedPanel = styled.div`
  ${panelBar}
  display: flex;
  align-items: center;
  height: 18px;
  margin-bottom: 2px;
  flex: none;
`;

const Taskbar = styled.div`
  display: flex;
  align-items: center;
  box-sizing: border-box;
  height: 40px;
  flex: none;
  background: linear-gradient(90deg, #7089a6 0, #a9c2dd 70px, #a9c2dd 995px, #7d8fa8 1035px);
  border-top: 1px solid #3c4656;
`;

const StartSlot = styled.div`
  width: 38px;
  margin-left: 7px;
  flex: none;
`;

const PinnedSlot = styled.div<{ $left: number }>`
  margin-left: ${(p) => p.$left}px;
  flex: none;
`;

const TaskButtons = styled.div`
  display: flex;
  align-items: center;
  gap: 3px;
  margin-left: 16px;
  flex: none;
`;

const TaskButton = styled.div<{ $first?: boolean; $active?: boolean }>`
  display: flex;
  align-items: center;
  justify-content: center;
  box-sizing: border-box;
  width: ${(p) => (p.$first ? 52 : 59)}px;
  height: 38px;
  margin-right: ${(p) => (p.$first ? 7 : 0)}px;
  background: ${(p) =>
    p.$active
      ? "linear-gradient(#e6eef6, #d4dfea 50%, #c0cfe0)"
      : "linear-gradient(#cddbea, #bccfe2 50%, #aec5dd)"};
  border: 1px solid #6f8298;
  border-radius: 3px;
  box-shadow: inset 0 0 0 1px rgba(255, 255, 255, 0.55);
`;

const Tray = styled.div`
  display: flex;
  align-items: center;
  margin-left: 234px;
  flex: none;
  color: #f2f5f8;
`;

const LangLabel = styled.div`
  width: 23px;
  text-align: center;
  font-family: "Liberation Sans", sans-serif;
  font-size: 12px;
`;

const HelpSlot = styled.div`
  display: flex;
  justify-content: center;
  width: 20px;
`;

const TrayItem = styled.div`
  display: flex;
  justify-content: center;
  width: 23.5px;
`;

const Clock = styled.div`
  display: flex;
  flex-direction: column;
  margin-left: 16px;
  font-family: "Liberation Sans", sans-serif;
  font-size: 11px;
  line-height: 17px;
  text-align: center;
  white-space: nowrap;
`;

const ColorPopup = styled.div`
  position: absolute;
  left: 259px;
  top: 184px;
  width: 253px;
  height: 172px;
  display: flex;
  flex-direction: column;
  box-sizing: border-box;
  border: 1px solid #000;
  border-bottom: 1px solid #666;
  border-right: 0;
  background: #efefef;
`;

const PopupHeader = styled.div`
  display: flex;
  align-items: center;
  box-sizing: border-box;
  height: 27px;
  flex: none;
  padding-left: 4px;
  border-bottom: 1px solid #777;
`;

const PopupSwatch = styled.div`
  box-sizing: border-box;
  width: 50px;
  height: 20px;
  background: #244278;
  border: 1px solid #777;
`;

const HexInput = styled.div`
  box-sizing: border-box;
  width: 73px;
  height: 19px;
  margin-left: 2px;
  padding-left: 5px;
  line-height: 18px;
  background: #fff;
  border: 1px solid #ddd;
  font-size: 10px;
`;

const NoneIcon = styled.svg`
  width: 12px;
  height: 12px;
  margin-left: 26px;
`;

const ColorWheel = styled.div`
  width: 12px;
  height: 12px;
  margin-left: 8px;
  border-radius: 50%;
  border: 1px solid #333;
  background: conic-gradient(#e02020, #f0e020, #20c020, #20c0e0, #2020e0, #e020c0, #e02020);
`;

const PopupMenuButton = styled.div`
  display: flex;
  align-items: center;
  justify-content: center;
  height: 26px;
  width: 15px;
  margin-left: auto;
  border-left: 1px solid #111;
`;

const RightArrowBlack = styled.div`
  width: 0;
  height: 0;
  border-top: 5px solid transparent;
  border-bottom: 5px solid transparent;
  border-left: 6px solid #111;
`;

const SwatchGrid = styled.div`
  display: grid;
  grid-template-columns: repeat(21, 11px);
  grid-auto-rows: 11px;
  gap: 1px;
  padding: 1px 0 0 1px;
  flex: 1;
  background: #000;
  margin-left: -1px;
`;

const SwatchCell = styled.div<{ $color: string }>`
  background: #${(p) => p.$color};
`;
